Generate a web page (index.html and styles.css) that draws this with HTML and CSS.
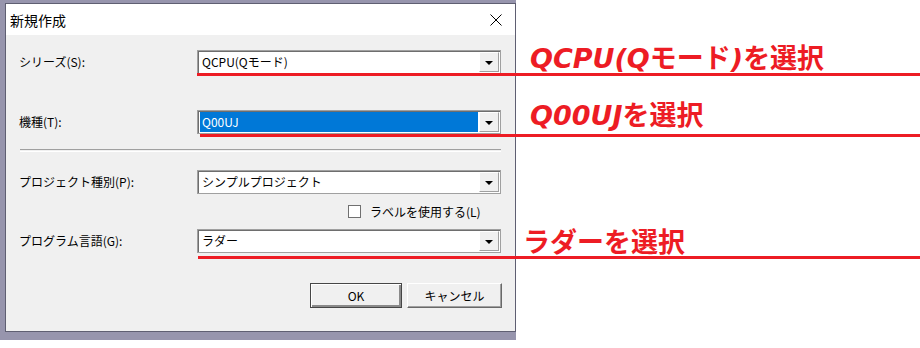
FILE: index.html
```html
<!DOCTYPE html>
<html lang="ja">
<head>
    <meta charset="UTF-8">
    <meta name="viewport" content="width=device-width, initial-scale=1.0">
    <title>新規作成</title>
    <link rel="stylesheet" href="styles.css">
</head>
<body>

<div class="page">
    <div class="shot">
        <div class="window">
            <div class="titlebar">
                <span class="title">新規作成</span>
                <svg class="close" width="12" height="12" viewBox="0 0 12 12">
                    <path d="M0.5 0.5 L11.5 11.5 M11.5 0.5 L0.5 11.5" stroke="#000" stroke-width="1" fill="none"/>
                </svg>
            </div>
            <div class="dialog">
                <div class="row row-series">
                    <label>シリーズ(S):</label>
                    <div class="combo">
                        <span class="combo-text">QCPU(Qモード)</span>
                        <span class="combo-btn"><i class="arrow"></i></span>
                    </div>
                </div>
                <div class="row row-model">
                    <label>機種(T):</label>
                    <div class="combo selected">
                        <span class="combo-text">Q00UJ</span>
                        <span class="combo-btn"><i class="arrow"></i></span>
                    </div>
                </div>
                <div class="separator"></div>
                <div class="row row-type">
                    <label>プロジェクト種別(P):</label>
                    <div class="combo">
                        <span class="combo-text">シンプルプロジェクト</span>
                        <span class="combo-btn"><i class="arrow"></i></span>
                    </div>
                </div>
                <div class="check-row">
                    <span class="checkbox"></span>
                    <span class="check-label">ラベルを使用する(L)</span>
                </div>
                <div class="row row-lang">
                    <label>プログラム言語(G):</label>
                    <div class="combo">
                        <span class="combo-text">ラダー</span>
                        <span class="combo-btn"><i class="arrow"></i></span>
                    </div>
                </div>
                <div class="buttons">
                    <button class="btn btn-default">OK</button>
                    <button class="btn btn-cancel">キャンセル</button>
                </div>
            </div>
        </div>
    </div>

    <!-- annotations drawn over the screenshot -->
    <div class="mark mark-1"></div>
    <div class="note note-1"><i>QCPU(Q</i>モード<i>)</i>を選択</div>
    <div class="mark mark-2"></div>
    <div class="note note-2"><i>Q00UJ</i>を選択</div>
    <div class="mark mark-3"></div>
    <div class="note note-3">ラダーを選択</div>
</div>

</body>
</html>
```

FILE: styles.css
```css
body {
    margin: 0;
    background: #fff;
    font-family: "Noto Sans CJK JP", "Noto Sans", sans-serif;
    font-size: 12px;
    color: #000;
}
.page {
    position: relative;
    width: 920px;
    height: 348px;
    overflow: hidden;
}
.shot {
    width: 516px;
    height: 340px;
    box-sizing: border-box;
    padding: 3px 0 0 5px;
    background: #9795ad;
}
.window {
    width: 511px;
    height: 329px;
    box-sizing: border-box;
    border: 1px solid #5f5f72;
    background: #f0f0f0;
    display: flex;
    flex-direction: column;
}
.titlebar {
    height: 31px;
    background: #fff;
    display: flex;
    align-items: center;
    justify-content: space-between;
    padding: 0 13px 0 4px;
}
.title {
    font-size: 14px;
}
.dialog {
    padding: 15px 14px 0 13px;
    display: flex;
    flex-direction: column;
}
.row {
    display: grid;
    grid-template-columns: 178px 304px;
    align-items: center;
    height: 24px;
}
.row label {
    line-height: 24px;
}
.row-model {
    margin-top: 36px;
}
.separator {
    margin: 15px 0 0 1px;
    height: 1px;
    border-top: 1px solid #a0a0a0;
    border-bottom: 1px solid #fff;
    width: 481px;
}
.row-type {
    margin-top: 18px;
}
.check-row {
    margin-top: 11px;
    height: 13px;
    display: flex;
    align-items: center;
    padding-left: 329px;
}
.checkbox {
    width: 13px;
    height: 13px;
    box-sizing: border-box;
    border: 1px solid #707070;
    background: #fff;
}
.check-label {
    margin-left: 9px;
    line-height: 13px;
}
.row-lang {
    margin-top: 11px;
}
.combo {
    height: 24px;
    box-sizing: border-box;
    border: 1px solid #a0a0a0;
    box-shadow: inset 1px 1px 0 #6e6e6e;
    background: #fff;
    display: flex;
    padding: 1px 1px 1px 2px;
}
.combo-text {
    flex: 1;
    padding-left: 2px;
    line-height: 20px;
}
.combo.selected .combo-text {
    background: #0078d7;
    color: #fff;
    margin-right: 1px;
}
.combo-btn {
    width: 20px;
    box-sizing: border-box;
    background: #f0f0f0;
    border-top: 1px solid #fff;
    border-left: 1px solid #fff;
    border-right: 1px solid #a0a0a0;
    border-bottom: 1px solid #a0a0a0;
    display: flex;
    align-items: center;
    justify-content: center;
}
.arrow {
    width: 0;
    height: 0;
    border-left: 4px solid transparent;
    border-right: 4px solid transparent;
    border-top: 4px solid #000;
    margin-top: 1px;
}
.buttons {
    margin-top: 30px;
    display: flex;
    justify-content: flex-end;
    gap: 5px;
    margin-right: -1px;
}
.btn {
    height: 25px;
    box-sizing: border-box;
    background: #f0f0f0;
    font-family: inherit;
    font-size: 12px;
    color: #000;
    padding: 0;
    border: 1px solid;
    border-color: #fff #696969 #696969 #fff;
    box-shadow: inset -1px -1px 0 #a0a0a0;
}
.btn-default {
    width: 92px;
    border: 1px solid #464646;
    box-shadow: inset 1px 1px 0 #fff, inset -2px -2px 0 #8a8a8a;
}
.btn-cancel {
    width: 95px;
}

/* red annotations */
.mark {
    position: absolute;
    right: 0;
    height: 3px;
    background: #ed1c24;
}
.mark-1 {
    left: 197px;
    top: 73px;
}
.mark-2 {
    left: 200px;
    top: 134px;
}
.mark-3 {
    left: 198px;
    top: 256px;
}
.note {
    position: absolute;
    color: #ed1c24;
    font-size: 27px;
    font-weight: bold;
    line-height: 30px;
    white-space: nowrap;
}
.note i {
    font-family: "DejaVu Sans", sans-serif;
    font-style: italic;
}
.note-1 {
    left: 530px;
    top: 42px;
}
.note-2 {
    left: 530px;
    top: 99px;
}
.note-3 {
    left: 523px;
    top: 226px;
}
```
